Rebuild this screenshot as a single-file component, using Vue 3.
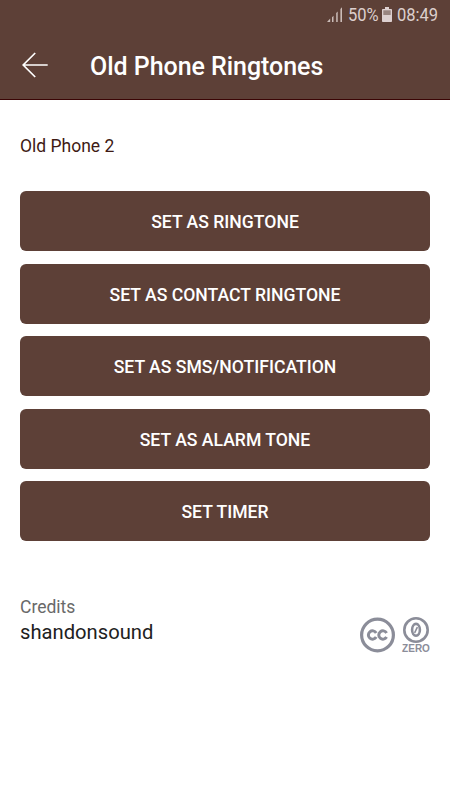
<script setup>
const actions = [
  'SET AS RINGTONE',
  'SET AS CONTACT RINGTONE',
  'SET AS SMS/NOTIFICATION',
  'SET AS ALARM TONE',
  'SET TIMER',
]
</script>

<template>
  <div class="screen">
    <header class="header">
      <div class="status">
        <svg class="signal" width="16" height="16" viewBox="0 0 16 16">
          <path d="M0 15 3.200 11.500V15z" />
          <path d="M5 10.200 6.500 8.700V15H5zM9.200 6l1.500-1.500V15H9.200zM13.400 2 15 .3V15h-1.600z" />
        </svg>
        <span class="percent"><span class="narrow">50%</span></span>
        <svg class="battery" width="10" height="16" viewBox="0 0 10 16">
          <path class="full" d="M3 0h4v2h2.200q.8 0 .8.8v11.400q0 .8-.8.8H.8q-.8 0-.8-.8V2.800Q0 2 .8 2H3z" />
          <path class="empty" d="M1.300 3.300h7.400v4.700H1.300z" />
        </svg>
        <span class="clock"><span class="narrow">08:49</span></span>
      </div>
      <div class="bar">
        <svg class="back" width="26" height="26" viewBox="0 0 26 26">
          <path d="M13.200 1 1.200 13l12 12M1.500 13h24.200" />
        </svg>
        <h1 class="title">Old Phone Ringtones</h1>
      </div>
    </header>
    <main class="content">
      <p class="name">Old Phone 2</p>
      <div class="actions">
        <button v-for="a in actions" :key="a" class="action" type="button">{{ a }}</button>
      </div>
      <section class="credits">
        <div>
          <p class="label">Credits</p>
          <p class="author">shandonsound</p>
        </div>
        <div class="license">
          <svg width="35" height="36" viewBox="0 0 35 36">
            <circle cx="17.500" cy="18" r="15.900" class="ring" />
            <path class="cc" d="M16.200 15.900A4.200 4.200 0 1 0 16.200 20.100M26.600 15.900A4.200 4.200 0 1 0 26.600 20.100" />
          </svg>
          <div class="zero">
            <svg width="26" height="26" viewBox="0 0 26 26">
              <circle cx="13" cy="13" r="11.700" class="ring thin" />
              <ellipse cx="13" cy="12.800" rx="3.900" ry="5.900" class="digit" />
              <path class="slash" d="m11.600 15.800 2.800-5.600" />
            </svg>
            <span class="zero-text">ZERO</span>
          </div>
        </div>
      </section>
    </main>
  </div>
</template>

<style>
body {
  background: #fff;
}
</style>

<style scoped>
.screen {
  width: 450px;
  height: 800px;
  overflow: hidden;
  background: #fff;
  font-family: Roboto, sans-serif;
}
p, h1 {
  margin: 0;
}
.header {
  box-sizing: border-box;
  height: 100px;
  background: #5d4037;
  border-bottom: 1px solid #3a0505;
}
.status {
  display: flex;
  height: 30px;
  padding-left: 327px;
  color: #dccfcd;
  font-size: 19px;
  line-height: 30px;
}
.signal {
  margin-top: 7px;
  fill: #cbbcb8;
}
.percent {
  width: 30px;
  margin-left: 5px;
}
.clock {
  width: 42px;
  margin-left: 5px;
}
.narrow {
  display: inline-block;
  transform: scaleX(0.87);
  transform-origin: left;
}
.battery {
  margin: 7px 0 0 4px;
}
.full {
  fill: #ddd0d0;
}
.empty {
  fill: #998580;
}
.bar {
  display: flex;
  align-items: center;
  height: 70px;
  padding-left: 22px;
}
.back {
  fill: none;
  stroke: #fff;
  stroke-width: 1.7;
}
.title {
  margin: 3px 0 0 42px;
  color: #fff;
  font-size: 25px;
  font-weight: 500;
  line-height: 32px;
  letter-spacing: -0.040px;
  white-space: nowrap;
}
.content {
  padding: 34px 20px 0;
}
.name {
  color: #3e1a14;
  font-size: 17.500px;
  line-height: 24px;
}
.actions {
  display: grid;
  gap: 12.500px;
  margin-top: 33.300px;
}
.action {
  height: 60px;
  padding: 2px 0 0;
  border: 0;
  border-radius: 6px;
  background: #5d4037;
  color: #fff;
  font: 500 17.600px/22px Roboto, sans-serif;
}
.credits {
  display: flex;
  justify-content: space-between;
  margin-top: 53px;
}
.label {
  padding-top: 1px;
  color: #696969;
  font-size: 17.500px;
  line-height: 25px;
}
.author {
  color: #212121;
  font-size: 20.200px;
  line-height: 25px;
}
.license {
  display: flex;
  gap: 7px;
  margin-top: 23px;
}
.zero {
  display: flex;
  flex-direction: column;
  align-items: center;
  width: 28px;
}
.ring {
  fill: none;
  stroke: #8b8d99;
  stroke-width: 3.2;
}
.thin {
  stroke-width: 2.6;
}
.cc {
  fill: none;
  stroke: #8b8d99;
  stroke-width: 3;
}
.digit {
  fill: none;
  stroke: #8b8d99;
  stroke-width: 2.6;
}
.slash {
  stroke: #8b8d99;
  stroke-width: 1.6;
}
.zero-text {
  color: #8b8d99;
  font: 700 10px/12px "Liberation Sans", sans-serif;
}
</style>
